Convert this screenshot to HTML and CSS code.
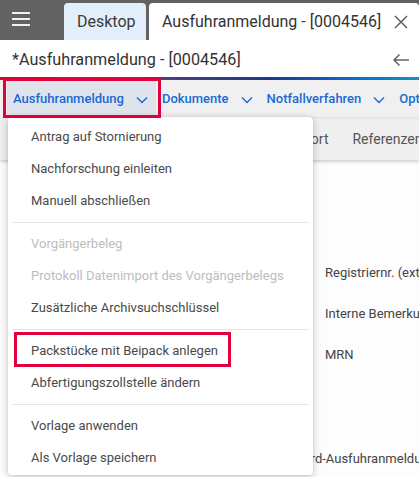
FILE: index.html
```html
<!DOCTYPE html>
<html lang="de">
<head>
<meta charset="utf-8">
<title>Ausfuhranmeldung</title>
<link rel="stylesheet" href="styles.css">
</head>
<body>
<div class="app">
  <header class="topbar">
    <button class="burger" aria-label="Menü">
      <span></span><span></span><span></span>
    </button>
    <div class="tab tab-desktop">Desktop</div>
    <div class="tab tab-active">
      <span>Ausfuhranmeldung - [0004546]</span>
      <svg class="close" width="14" height="14" viewBox="0 0 14 14"><path d="M1 1 L13 13 M13 1 L1 13" stroke="#555" stroke-width="1.4" fill="none"/></svg>
    </div>
  </header>
  <div class="titlebar">
    <span class="title">*Ausfuhranmeldung - [0004546]</span>
    <svg class="back" width="18" height="14" viewBox="0 0 18 14"><path d="M17 7 H2 M7.5 1.5 L2 7 L7.5 12.5" stroke="#666" stroke-width="1.5" fill="none"/></svg>
  </div>
  <div class="gradient"></div>
  <nav class="navbar">
    <div class="navitem active">Ausfuhranmeldung<svg class="chev" width="12" height="8" viewBox="0 0 12 8"><path d="M1 1.5 L6 6.5 L11 1.5" stroke="#1a6ad4" stroke-width="1.4" fill="none"/></svg></div>
    <div class="navitem">Dokumente<svg class="chev" width="12" height="8" viewBox="0 0 12 8"><path d="M1 1.5 L6 6.5 L11 1.5" stroke="#1a6ad4" stroke-width="1.4" fill="none"/></svg></div>
    <div class="navitem">Notfallverfahren<svg class="chev" width="12" height="8" viewBox="0 0 12 8"><path d="M1 1.5 L6 6.5 L11 1.5" stroke="#1a6ad4" stroke-width="1.4" fill="none"/></svg></div>
    <div class="navitem">Optionen</div>
  </nav>
  <div class="subtabs">
    <span class="subtab">Allgemein</span>
    <span class="subtab">Transport</span>
    <span class="subtab">Referenzen</span>
  </div>
  <main class="content">
    <div class="field">Registriernr. (extern)</div>
    <div class="field">Interne Bemerkung</div>
    <div class="field">MRN</div>
    <div class="field-bottom">Standard-Ausfuhranmeldung</div>
  </main>

  <div class="highlight-nav"></div>

  <div class="menu">
    <div class="mi">Antrag auf Stornierung</div>
    <div class="mi">Nachforschung einleiten</div>
    <div class="mi">Manuell abschließen</div>
    <div class="sep"></div>
    <div class="mi disabled">Vorgängerbeleg</div>
    <div class="mi disabled">Protokoll Datenimport des Vorgängerbelegs</div>
    <div class="mi">Zusätzliche Archivsuchschlüssel</div>
    <div class="sep"></div>
    <div class="mi">Packstücke mit Beipack anlegen</div>
    <div class="mi">Abfertigungszollstelle ändern</div>
    <div class="sep"></div>
    <div class="mi">Vorlage anwenden</div>
    <div class="mi">Als Vorlage speichern</div>
    <div class="highlight-item"></div>
  </div>
</div>
</body>
</html>
```
FILE: styles.css
```css
* { box-sizing: border-box; }
html, body { margin: 0; padding: 0; }
body {
  font-family: Roboto, "Noto Sans", "Liberation Sans", sans-serif;
  width: 419px;
  height: 477px;
  overflow: hidden;
  background: #fff;
}
.app { position: relative; width: 419px; height: 477px; overflow: hidden; }

.topbar {
  height: 40px;
  background: #626262;
  display: flex;
  align-items: flex-end;
}
.burger {
  width: 64px;
  height: 40px;
  border: 0;
  background: transparent;
  padding: 12px 0 0 12px;
  display: flex;
  flex-direction: column;
  justify-content: flex-start;
  gap: 4px;
  align-self: stretch;
}
.burger span {
  display: block;
  width: 18px;
  height: 2px;
  background: #f2f2f2;
}
.tab {
  height: 37px;
  border-radius: 4px 4px 0 0;
  font-size: 16px;
  display: flex;
  align-items: center;
  color: #333;
}
.tab-desktop {
  width: 82px;
  background: #e2eefa;
  padding-left: 13px;
  color: #3a3a3a;
  margin-right: 3px;
}
.tab-active {
  flex: 1;
  background: #fff;
  padding-left: 13px;
  padding-right: 11px;
  justify-content: space-between;
  white-space: nowrap;
}
.close { flex: none; }

.titlebar {
  height: 37px;
  background: #fff;
  display: flex;
  align-items: center;
  justify-content: space-between;
  padding: 2px 9px 0 12px;
}
.title { font-size: 16.2px; color: #333; }

.gradient {
  height: 3px;
  background: linear-gradient(90deg, #c8102e 0%, #8a2a6a 22%, #4f3f8a 38%, #1b3b8a 64%, #0a6fd4 86%, #1a8fb4 100%);
}

.navbar {
  height: 37px;
  background: #f0f0f0;
  display: flex;
  align-items: stretch;
  padding-left: 7px;
  box-shadow: 0 1px 2px rgba(0,0,0,0.08);
  position: relative;
  z-index: 1;
}
.navitem {
  display: flex;
  align-items: center;
  padding: 0 8px 0 6px;
  font-size: 13px;
  font-weight: 500;
  color: #1a6ad4;
  white-space: nowrap;
  gap: 12px;
}
.navitem.active { background: #dfe3eb; }
.chev { flex: none; margin-top: 2px; }

.subtabs {
  height: 43px;
  background: #efefef;
  display: flex;
  align-items: center;
  padding-left: 182px;
  gap: 24px;
  font-size: 14px;
  color: #555;
  box-shadow: 0 2px 3px rgba(0,0,0,0.18);
  position: relative;
  white-space: nowrap;
}

.content {
  height: 320px;
  background: #fdfdfd;
  padding: 102px 0 0 325px;
  font-size: 13px;
  color: #444;
  white-space: nowrap;
  display: flex;
  flex-direction: column;
}
.field { height: 41px; line-height: 22px; }
.field-bottom { margin-top: 66px; margin-left: -55px; }

.highlight-nav {
  position: absolute;
  left: 3px;
  top: 78px;
  width: 158px;
  height: 40px;
  border: 3px solid #e0003c;
  z-index: 3;
}

.menu {
  position: absolute;
  left: 8px;
  top: 117px;
  width: 305px;
  height: 358px;
  background: #fff;
  border-radius: 4px;
  box-shadow: 0 2px 8px rgba(0,0,0,0.22), 0 0 2px rgba(0,0,0,0.12);
  padding-top: 4px;
  z-index: 2;
}
.mi {
  height: 32px;
  line-height: 32px;
  padding-left: 23px;
  font-size: 13px;
  color: #4a4a4a;
  white-space: nowrap;
}
.mi.disabled { color: #bdbdbd; }
.sep {
  height: 1px;
  background: #e6e6e6;
  margin: 5px 4px;
}
.highlight-item {
  position: absolute;
  left: 6px;
  top: 215px;
  width: 217px;
  height: 35px;
  border: 3px solid #e0003c;
}
```
